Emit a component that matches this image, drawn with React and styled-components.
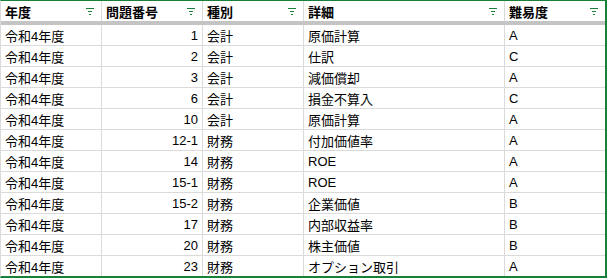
// libraries
import styled, { createGlobalStyle } from 'styled-components';

const COLUMNS = [
  { key: 'year', label: '年度', width: 101 },
  { key: 'no', label: '問題番号', width: 101, align: 'right' },
  { key: 'kind', label: '種別', width: 101 },
  { key: 'detail', label: '詳細', width: 201 },
  { key: 'level', label: '難易度', width: 100 },
];

const ROWS = [
  ['令和4年度', '1', '会計', '原価計算', 'A'],
  ['令和4年度', '2', '会計', '仕訳', 'C'],
  ['令和4年度', '3', '会計', '減価償却', 'A'],
  ['令和4年度', '6', '会計', '損金不算入', 'C'],
  ['令和4年度', '10', '会計', '原価計算', 'A'],
  ['令和4年度', '12-1', '財務', '付加価値率', 'A'],
  ['令和4年度', '14', '財務', 'ROE', 'A'],
  ['令和4年度', '15-1', '財務', 'ROE', 'A'],
  ['令和4年度', '15-2', '財務', '企業価値', 'B'],
  ['令和4年度', '17', '財務', '内部収益率', 'B'],
  ['令和4年度', '20', '財務', '株主価値', 'B'],
  ['令和4年度', '23', '財務', 'オプション取引', 'A'],
];

const GRID_COLUMNS = COLUMNS.map((c) => `${c.width}px`).join(' ');

// styles
const GlobalStyle = createGlobalStyle`
  html, body {
    margin: 0;
    padding: 0;
    background: #fff;
  }
  body {
    font-family: "Liberation Sans", "Noto Sans CJK JP", sans-serif;
    font-size: 13px;
    color: #000;
  }
`;

const Sheet = styled.div`
  width: 607px;
  height: 278px;
  box-sizing: border-box;
  border-top: 1px solid #188038;
  border-right: 2px solid #188038;
  border-bottom: 2px solid #188038;
  border-left: 1px solid #dadada;
  display: flex;
  flex-direction: column;
  overflow: hidden;
`;

const Row = styled.div`
  display: grid;
  grid-template-columns: ${GRID_COLUMNS};
  height: 21px;
  box-sizing: border-box;
  border-bottom: 1px solid #dadada;

  &:last-child {
    height: 20px;
    border-bottom: none;
  }
`;

const HeaderRow = styled.div`
  display: grid;
  grid-template-columns: ${GRID_COLUMNS};
  height: 24px;
  box-sizing: border-box;
  border-bottom: 4px solid #c4c4c4;
`;

const Cell = styled.div`
  box-sizing: border-box;
  border-right: 1px solid #dadada;
  display: flex;
  align-items: center;
  justify-content: ${(props) => (props.$align === 'right' ? 'flex-end' : 'flex-start')};
  padding: 1px 4px 0 4px;
  white-space: nowrap;
  overflow: hidden;

  &:last-child {
    border-right: none;
  }
`;

const HeaderCell = styled(Cell)`
  justify-content: space-between;
  font-weight: bold;
  padding: 0 7px 0 4px;
`;

const FilterIcon = styled.svg`
  width: 8px;
  height: 8px;
  flex: none;
  display: block;
`;

function Filter() {
  return (
    <FilterIcon viewBox="0 0 8 8" shapeRendering="crispEdges">
      <rect x="0" y="1" width="8" height="1" fill="#188038" />
      <rect x="2" y="4" width="4" height="1" fill="#188038" />
      <rect x="3" y="7" width="2" height="1" fill="#188038" />
    </FilterIcon>
  );
}

export default function App() {
  return (
    <>
      <GlobalStyle />
      <Sheet>
        <HeaderRow>
          {COLUMNS.map((column) => {
            return (
              <HeaderCell key={column.key}>
                <span>{column.label}</span>
                <Filter />
              </HeaderCell>
            );
          })}
        </HeaderRow>
        {ROWS.map((row, rowIndex) => {
          return (
            <Row key={rowIndex}>
              {row.map((value, colIndex) => {
                return (
                  <Cell key={COLUMNS[colIndex].key} $align={COLUMNS[colIndex].align}>
                    {value}
                  </Cell>
                );
              })}
            </Row>
          );
        })}
      </Sheet>
    </>
  );
}
